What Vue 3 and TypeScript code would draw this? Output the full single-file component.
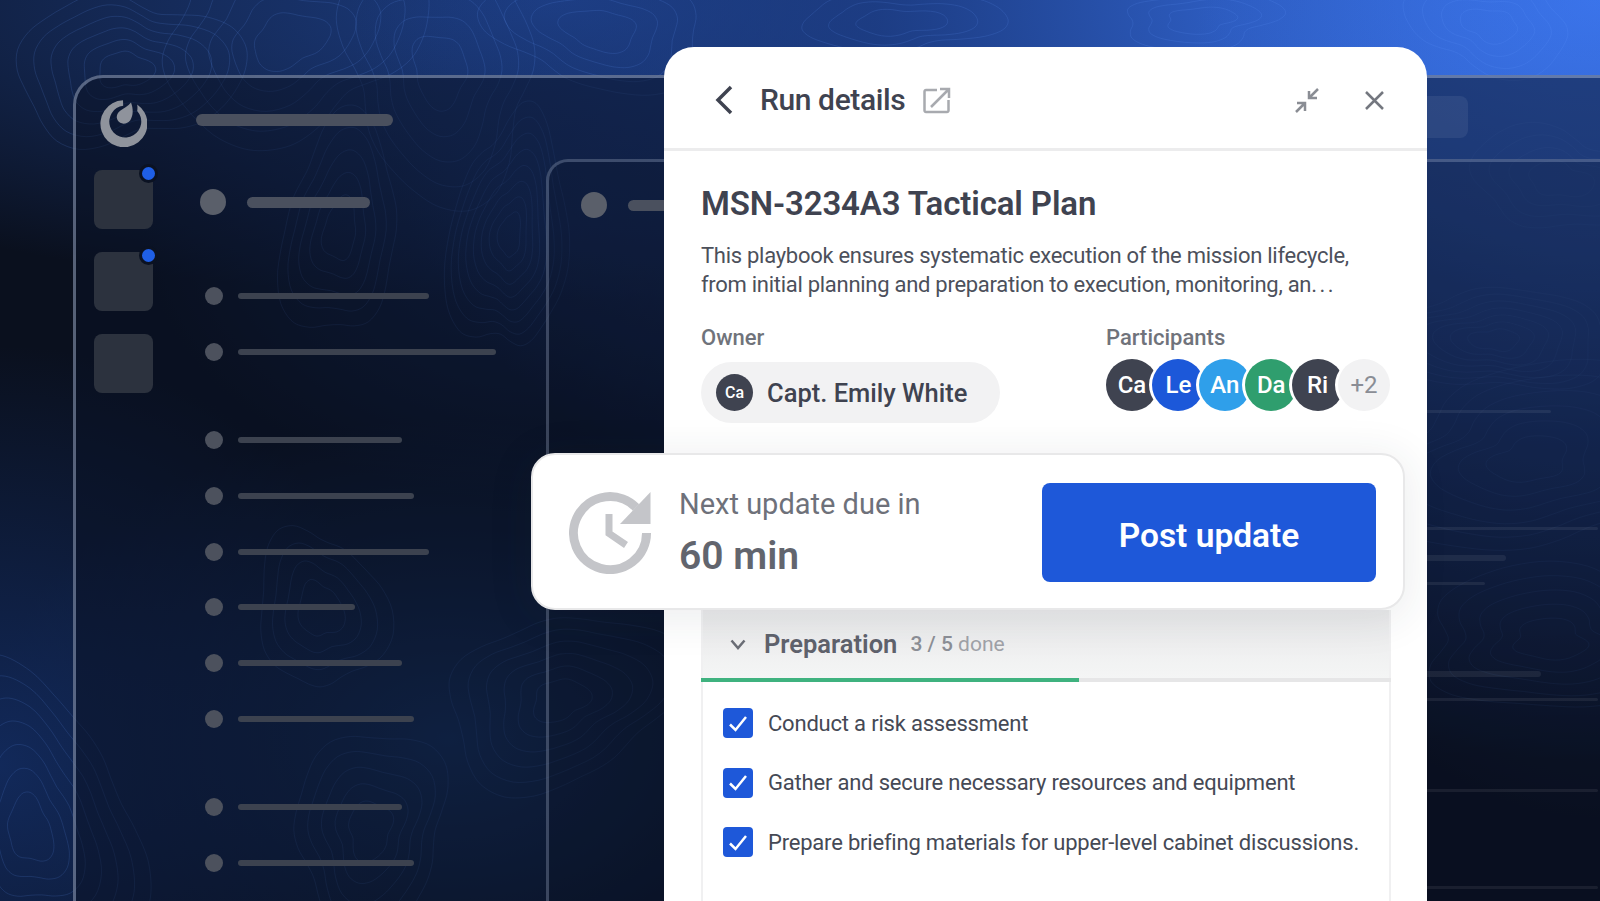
<template>
  <div class="stage">
    <div class="backdrop" />
    <svg class="contours" width="1600" height="901" viewBox="0 0 1600 901" fill="none">
      <path v-for="(d, i) in contours" :key="i" :d="d" />
    </svg>

    <div class="window">
      <aside class="rail">
        <svg class="logo" width="47" height="47" viewBox="0 0 47 47">
          <path d="M23 .3A23.5 23.5 0 1 0 37.2 4.4C37.6 7 37.5 9 37.2 10.9A16 16 0 1 1 23.2 5.7Z" />
          <path d="M31 2.5C33.4 9 33.4 15.5 30.3 20.2 27.2 24.6 20.2 24.8 17.8 20.6 15.6 16.6 17.2 13 20.5 10.6 24 8 28 6 31 2.5Z" />
        </svg>
        <div v-for="n in 3" :key="n" class="tile">
          <span v-if="n < 3" class="tile-dot" />
        </div>
      </aside>

      <div class="main">
        <div class="top-row">
          <div class="top-bar" />
          <div class="top-pill" />
        </div>
        <div class="body-row">
          <section class="list">
            <div class="list-head">
              <span class="head-dot" />
              <span class="head-bar" />
            </div>
            <div
              v-for="(row, i) in listRows"
              :key="i"
              class="list-row"
              :style="{ marginTop: row.gap + 'px' }"
            >
              <span class="row-dot" />
              <span class="row-bar" :style="{ width: row.width + 'px' }" />
            </div>
          </section>
          <section class="sub-window">
            <div class="list-head">
              <span class="head-dot" />
              <span class="head-bar" />
            </div>
            <div class="far-lines">
              <span
                v-for="(line, i) in farLines"
                :key="i"
                class="far-line"
                :style="{ marginTop: line.gap + 'px', width: line.width + 'px', height: line.h + 'px' }"
              />
            </div>
          </section>
        </div>
      </div>
    </div>

    <div class="panel">
      <header class="panel-head">
        <svg class="back" width="20" height="30" viewBox="0 0 20 30" fill="none">
          <path d="M17 2 4 15l13 13" />
        </svg>
        <h2 class="panel-name">Run details</h2>
        <svg class="open" width="28" height="27" viewBox="0 0 28 27" fill="none">
          <path d="M14 3H3a1.500 1.500 0 0 0-1.500 1.500v19A1.500 1.500 0 0 0 3 25h21a1.500 1.500 0 0 0 1.500-1.500V13" />
          <path d="M8 20 26 2M17 2h9v9" />
        </svg>
        <span class="spacer" />
        <svg class="shrink" width="26" height="25" viewBox="0 0 26 25" fill="none">
          <path d="M24 1 15 10M15 3v7h8M2 24l9-9M3 15h8v8" />
        </svg>
        <svg class="close" width="21" height="19" viewBox="0 0 21 19" fill="none">
          <path d="M2 1l17 17M19 1 2 18" />
        </svg>
      </header>

      <div class="panel-body">
        <h1 class="title">MSN-3234A3 Tactical Plan</h1>
        <p class="desc">
          This playbook ensures systematic execution of the mission lifecycle,<br />
          from initial planning and preparation to execution, monitoring, an<span class="dots">...</span>
        </p>

        <div class="people">
          <div class="owner">
            <div class="label">Owner</div>
            <div class="owner-pill">
              <span class="owner-avatar">Ca</span>
              <span class="owner-name">Capt. Emily White</span>
            </div>
          </div>
          <div class="participants">
            <div class="label">Participants</div>
            <div class="avatars">
              <span
                v-for="p in participants"
                :key="p.name"
                class="avatar"
                :style="{ background: p.color }"
              >{{ p.name }}</span>
              <span class="avatar more">+2</span>
            </div>
          </div>
        </div>

        <div class="section">
          <div class="section-head">
            <svg class="caret" width="16" height="11" viewBox="0 0 16 11" fill="none">
              <path d="M1.500 1.500 8 9l6.500-7.500" />
            </svg>
            <span class="section-name">Preparation</span>
            <span class="section-count"><b>3 / 5</b> done</span>
          </div>
          <div class="progress"><div class="progress-fill" /></div>
          <ul class="tasks">
            <li v-for="task in tasks" :key="task" class="task">
              <span class="check">
                <svg width="20" height="17" viewBox="0 0 20 17" fill="none">
                  <path d="M2 9.500 7.500 15 18 2" />
                </svg>
              </span>
              <span>{{ task }}</span>
            </li>
          </ul>
        </div>
      </div>
    </div>

    <div class="update-card">
      <svg class="clock" width="82" height="82" viewBox="0 0 82 82" fill="none">
        <path class="clock-ring" d="M77.500 41A36.500 36.500 0 1 1 67 15.500" />
        <path class="clock-ring thin" d="M40 22V41.500L57 53" />
        <path class="clock-tip" d="M81.500 0V32H51Z" />
      </svg>
      <div class="update-text">
        <div class="update-label">Next update due in</div>
        <div class="update-time">60 min</div>
      </div>
      <button class="post" type="button">Post update</button>
    </div>
  </div>
</template>

<script setup lang="ts">
interface Blob {
  x: number
  y: number
  rx: number
  ry: number
  rings: number
  seed: number
}

// topographic background: wobbly rings round a few centres
const blobs: Blob[] = [
  { x: 125, y: 70, rx: 24, ry: 20, rings: 6, seed: 1 },
  { x: 290, y: 40, rx: 38, ry: 26, rings: 5, seed: 2 },
  { x: 440, y: 70, rx: 30, ry: 32, rings: 5, seed: 3 },
  { x: 600, y: 30, rx: 34, ry: 22, rings: 4, seed: 4 },
  { x: 510, y: 235, rx: 10, ry: 24, rings: 8, seed: 5 },
  { x: 340, y: 230, rx: 18, ry: 28, rings: 5, seed: 6 },
  { x: 30, y: 830, rx: 24, ry: 30, rings: 7, seed: 7 },
  { x: 320, y: 610, rx: 20, ry: 30, rings: 4, seed: 8 },
  { x: 560, y: 700, rx: 26, ry: 22, rings: 6, seed: 9 },
  { x: 370, y: 830, rx: 24, ry: 26, rings: 5, seed: 10 },
  { x: 1490, y: 25, rx: 28, ry: 16, rings: 4, seed: 11 },
  { x: 1495, y: 340, rx: 22, ry: 12, rings: 7, seed: 12 },
  { x: 1530, y: 460, rx: 38, ry: 22, rings: 6, seed: 13 },
  { x: 1550, y: 640, rx: 40, ry: 18, rings: 5, seed: 14 },
  { x: 1560, y: 180, rx: 30, ry: 18, rings: 4, seed: 15 },
  { x: 900, y: 22, rx: 40, ry: 14, rings: 3, seed: 16 },
  { x: 1200, y: 20, rx: 36, ry: 12, rings: 3, seed: 17 },
]

function ring(b: Blob, k: number): string {
  const pts: [number, number][] = []
  const steps = 28
  const grow = 1 + k * 0.62
  for (let i = 0; i < steps; i++) {
    const a = (i / steps) * Math.PI * 2
    const wob =
      1 +
      0.16 * Math.sin(a * 2 + b.seed * 1.7) +
      0.1 * Math.sin(a * 3 + b.seed * 0.9 + k * 0.15) +
      0.06 * Math.sin(a * 5 + b.seed * 2.3 + k * 0.3)
    pts.push([b.x + Math.cos(a) * b.rx * grow * wob, b.y + Math.sin(a) * b.ry * grow * wob])
  }
  let d = `M${pts[0][0].toFixed(1)} ${pts[0][1].toFixed(1)}`
  for (let i = 0; i < steps; i++) {
    const p0 = pts[(i + steps - 1) % steps]
    const p1 = pts[i]
    const p2 = pts[(i + 1) % steps]
    const p3 = pts[(i + 2) % steps]
    const c1x = p1[0] + (p2[0] - p0[0]) / 6
    const c1y = p1[1] + (p2[1] - p0[1]) / 6
    const c2x = p2[0] - (p3[0] - p1[0]) / 6
    const c2y = p2[1] - (p3[1] - p1[1]) / 6
    d += `C${c1x.toFixed(1)} ${c1y.toFixed(1)} ${c2x.toFixed(1)} ${c2y.toFixed(1)} ${p2[0].toFixed(1)} ${p2[1].toFixed(1)}`
  }
  return d + 'Z'
}

const contours: string[] = blobs.flatMap((b) =>
  Array.from({ length: b.rings }, (_, k) => ring(b, k)),
)

const listRows = [
  { gap: 72, width: 191 },
  { gap: 38, width: 258 },
  { gap: 70, width: 164 },
  { gap: 38, width: 176 },
  { gap: 38, width: 191 },
  { gap: 37, width: 117 },
  { gap: 38, width: 164 },
  { gap: 38, width: 176 },
  { gap: 70, width: 164 },
  { gap: 38, width: 176 },
]

const farLines = [
  { gap: 0, width: 127, h: 3 },
  { gap: 114, width: 174, h: 3 },
  { gap: 25, width: 82, h: 6 },
  { gap: 21, width: 61, h: 3 },
  { gap: 86, width: 117, h: 6 },
  { gap: 21, width: 174, h: 3 },
  { gap: 88, width: 174, h: 3 },
  { gap: 94, width: 174, h: 3 },
]

const participants = [
  { name: 'Ca', color: '#3f4350' },
  { name: 'Le', color: '#1c58d9' },
  { name: 'An', color: '#2f9fea' },
  { name: 'Da', color: '#2f9e6e' },
  { name: 'Ri', color: '#3f4350' },
]

const tasks = [
  'Conduct a risk assessment',
  'Gather and secure necessary resources and equipment',
  'Prepare briefing materials for upper-level cabinet discussions.',
]
</script>

<style>
html,
body {
  margin: 0;
  background: #0b1222;
}
</style>

<style scoped>
.stage {
  position: relative;
  width: 1600px;
  height: 901px;
  overflow: hidden;
  font-family: Roboto, "Liberation Sans", sans-serif;
  background: #0b1222;
}

.backdrop {
  position: absolute;
  inset: 0;
  background:
    radial-gradient(ellipse 420px 640px at 100% 20%, rgba(60, 115, 230, 0.4) 0%, rgba(50, 100, 210, 0) 100%),
    radial-gradient(ellipse 1250px 760px at 100% 0%, #3a74ec 0%, #2d5cc0 30%, rgba(30, 64, 140, 0.8) 58%, rgba(20, 44, 100, 0) 100%),
    radial-gradient(ellipse 1000px 300px at 35% 0%, #1c3c80 0%, rgba(20, 44, 100, 0) 100%),
    radial-gradient(ellipse 420px 280px at 35% 25%, rgba(24, 56, 120, 0.55) 0%, rgba(20, 50, 110, 0) 100%),
    radial-gradient(ellipse 420px 420px at 0% 85%, #12295a 0%, rgba(18, 41, 90, 0) 100%),
    radial-gradient(ellipse 460px 320px at 28% 82%, #14305f 0%, rgba(15, 35, 72, 0) 100%),
    #0a101e;
}

.contours {
  position: absolute;
  inset: 0;
}

.contours path {
  stroke: rgba(100, 155, 255, 0.15);
  stroke-width: 1;
}

/* background app */
.window {
  position: relative;
  display: flex;
  box-sizing: border-box;
  height: 826px;
  margin: 75px 0 0 73px;
  border: solid rgba(180, 195, 225, 0.45);
  border-width: 3px 0 0 3px;
  border-top-left-radius: 30px;
  background: rgba(10, 17, 36, 0.52);
}

.rail {
  display: flex;
  flex-direction: column;
  flex: none;
  align-items: center;
  width: 92px;
  box-sizing: border-box;
  padding: 22px 13px 0 15px;
}

.logo {
  margin-bottom: 23px;
  fill: #8f939c;
}

.tile {
  position: relative;
  width: 59px;
  height: 59px;
  margin-bottom: 23px;
  border-radius: 8px;
  background: #2c323e;
}

.tile-dot {
  position: absolute;
  top: -6px;
  right: -5px;
  width: 13px;
  height: 13px;
  border: 3px solid #0b1222;
  border-radius: 50%;
  background: #1f5fe6;
}

.main {
  flex: 1;
  min-width: 0;
}

.top-row {
  position: relative;
  height: 81px;
  padding: 36px 0 0 28px;
  box-sizing: border-box;
}

.top-bar {
  width: 197px;
  height: 12px;
  border-radius: 6px;
  background: #4a505e;
}

.top-pill {
  position: absolute;
  top: 18px;
  right: 132px;
  width: 300px;
  height: 42px;
  border-radius: 8px;
  background: rgba(255, 255, 255, 0.07);
}

.body-row {
  display: flex;
  height: 670px;
}

.list {
  flex: none;
  width: 378px;
  padding: 30px 0 0 0;
  box-sizing: border-box;
}

.list-head {
  display: flex;
  align-items: center;
  gap: 21px;
  padding-left: 32px;
  height: 26px;
}

.head-dot {
  flex: none;
  width: 26px;
  height: 26px;
  border-radius: 50%;
  background: #5a5f6a;
}

.head-bar {
  width: 123px;
  height: 11px;
  border-radius: 6px;
  background: #4a505e;
}

.list-row {
  display: flex;
  align-items: center;
  gap: 15px;
  height: 18px;
  padding-left: 37px;
}

.row-dot {
  flex: none;
  width: 18px;
  height: 18px;
  border-radius: 50%;
  background: #4c515d;
}

.row-bar {
  height: 6px;
  border-radius: 3px;
  background: #3c424f;
}

.sub-window {
  flex: 1;
  box-sizing: border-box;
  height: 770px;
  padding-top: 30px;
  border: solid rgba(170, 185, 215, 0.3);
  border-width: 3px 0 0 3px;
  border-top-left-radius: 22px;
  background: rgba(8, 14, 30, 0.2);
}

.sub-window .list-head {
  padding-left: 32px;
}

.far-lines {
  display: flex;
  flex-direction: column;
  align-items: flex-start;
  margin: 192px 0 0 875px;
}

.far-line {
  flex: none;
  border-radius: 3px;
  background: rgba(255, 255, 255, 0.07);
}

/* run details panel */
.panel {
  position: absolute;
  top: 47px;
  left: 664px;
  display: flex;
  flex-direction: column;
  width: 763px;
  height: 880px;
  border-radius: 30px 30px 0 0;
  background: #fff;
  color: #3f4350;
}

.panel-head {
  display: flex;
  flex: none;
  align-items: center;
  box-sizing: border-box;
  height: 104px;
  padding: 5px 42px 0 50px;
  border-bottom: 3px solid #ececed;
}

.back path {
  stroke: #3f4350;
  stroke-width: 3.500;
}

.panel-name {
  margin: 0 0 0 26px;
  font-size: 30px;
  font-weight: 500;
  line-height: 36px;
  letter-spacing: -0.4px;
}

.open {
  margin-left: 18px;
}

.open path {
  stroke: #a8aaaf;
  stroke-width: 2.500;
}

.spacer {
  flex: 1;
}

.shrink path {
  stroke: #8a8d94;
  stroke-width: 2.500;
}

.close {
  margin-left: 44px;
}

.close path {
  stroke: #74777f;
  stroke-width: 2.500;
}

.panel-body {
  padding: 0 36px 0 37px;
}

.title {
  margin: 33px 0 0;
  font-size: 33px;
  font-weight: 600;
  line-height: 40px;
  letter-spacing: -0.13px;
}

.desc {
  margin: 17px 0 0;
  font-size: 22px;
  line-height: 29px;
  letter-spacing: -0.28px;
  color: #4c505b;
  white-space: nowrap;
}

.dots {
  letter-spacing: 2.500px;
}

.people {
  display: flex;
  justify-content: space-between;
  margin-top: 25px;
}

.label {
  font-size: 22px;
  font-weight: 500;
  line-height: 28px;
  color: #70737b;
}

.owner-pill {
  display: flex;
  align-items: center;
  box-sizing: border-box;
  width: 299px;
  height: 61px;
  margin-top: 10px;
  padding-left: 15px;
  border-radius: 31px;
  background: #f2f2f3;
}

.owner-avatar {
  display: flex;
  align-items: center;
  justify-content: center;
  width: 37px;
  height: 37px;
  border-radius: 50%;
  background: #3f4350;
  color: #fff;
  font-size: 16px;
  font-weight: 500;
}

.owner-name {
  margin-left: 14px;
  font-size: 25.500px;
  font-weight: 500;
}

.participants {
  width: 285px;
}

.avatars {
  display: flex;
  margin-top: 7px;
}

.avatar {
  display: flex;
  flex: none;
  align-items: center;
  justify-content: center;
  box-sizing: border-box;
  width: 52px;
  height: 52px;
  border-radius: 50%;
  color: #fff;
  font-size: 24px;
  font-weight: 500;
}

.avatar + .avatar {
  margin-left: -5.600px;
  box-shadow: -3px 0 0 0 #fff;
}

.avatar.more {
  background: #f2f2f3;
  color: #8a8d95;
  font-weight: 400;
}

.section {
  position: relative;
  height: 400px;
  margin-top: 187px;
  border: solid #f0f0f1;
  border-width: 0 2px;
}

.section-head {
  display: flex;
  align-items: center;
  box-sizing: border-box;
  height: 68px;
  padding-left: 27px;
  background: linear-gradient(#e9e9ea, #f4f5f5);
}

.caret path {
  stroke: #6b6e76;
  stroke-width: 2.500;
}

.section-name {
  margin-left: 18px;
  font-size: 25.500px;
  font-weight: 600;
  color: #5f626c;
}

.section-count {
  margin-left: 13px;
  font-size: 21px;
  color: #a0a2a8;
}

.section-count b {
  font-weight: 500;
  color: #8c8f96;
}

.progress {
  height: 4px;
  margin: 0 -2px 0 -2px;
  background: #e6e6e7;
}

.progress-fill {
  width: 54.800%;
  height: 100%;
  background: #3fb27f;
}

.tasks {
  margin: 0;
  padding: 26px 0 0 20px;
  list-style: none;
}

.task {
  display: flex;
  align-items: center;
  gap: 15px;
  height: 30px;
  margin-bottom: 29.500px;
  font-size: 22px;
  letter-spacing: -0.2px;
  color: #454955;
  white-space: nowrap;
}

.check {
  display: flex;
  flex: none;
  align-items: center;
  justify-content: center;
  width: 30px;
  height: 30px;
  border-radius: 4px;
  background: #1e58d9;
}

.check path {
  stroke: #fff;
  stroke-width: 2.500;
}

/* floating update card */
.update-card {
  position: absolute;
  top: 453px;
  left: 531px;
  display: flex;
  align-items: center;
  box-sizing: border-box;
  width: 874px;
  height: 157px;
  padding: 0 27px 0 36px;
  border: 2px solid #e8e8e9;
  border-radius: 24px;
  background: #fff;
  box-shadow: 0 6px 40px 6px rgba(40, 50, 70, 0.08);
}

.clock {
  flex: none;
  margin-top: 2px;
}

.clock-ring {
  stroke: #c4c5c9;
  stroke-width: 9;
}

.clock-ring.thin {
  stroke-width: 7;
}

.clock-tip {
  fill: #c4c5c9;
}

.update-text {
  flex: 1;
  margin-left: 28px;
}

.update-label {
  font-size: 29px;
  line-height: 36px;
  color: #6e717a;
}

.update-time {
  margin-top: 12px;
  font-size: 39px;
  font-weight: 600;
  line-height: 44px;
  color: #62656e;
}

.post {
  flex: none;
  width: 334px;
  height: 99px;
  margin-top: 2px;
  padding-top: 6px;
  border: 0;
  border-radius: 8px;
  background: #1e58d9;
  color: #fff;
  font-family: inherit;
  font-size: 33.500px;
  font-weight: 600;
}
</style>
